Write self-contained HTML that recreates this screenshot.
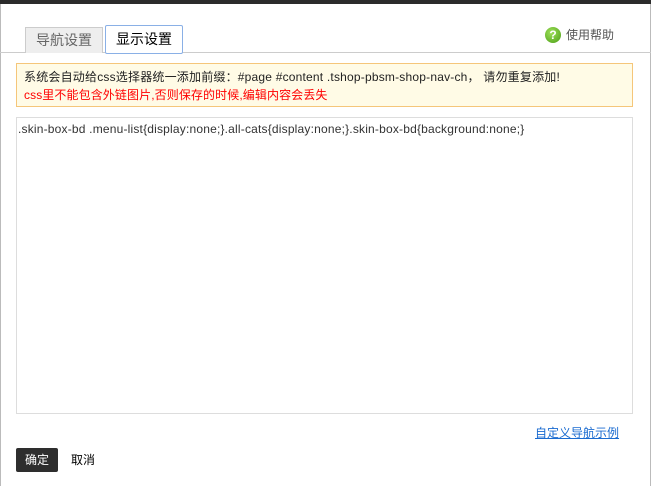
<html><head><style>
body{margin:0;width:651px;height:486px;background:#fff;position:relative;overflow:hidden;font-family:"Liberation Sans","Noto Sans CJK SC",sans-serif;font-size:12px}
.a{position:absolute}
</style></head><body>
<div class="a" style="left:0;top:0;width:651px;height:4px;background:#2b2b2b"></div>
<div class="a" style="left:0;top:4px;width:1px;height:482px;background:#bbb"></div>
<div class="a" style="left:650px;top:4px;width:1px;height:482px;background:#bbb"></div>
<div class="a" style="left:0;top:52px;width:651px;height:1px;background:#ccc"></div>
<div class="a" style="left:25px;top:27px;width:76px;height:25px;background:#eee;border:1px solid #ccc;border-bottom:none;color:#666;font-size:14px;line-height:25px;text-align:center">导航设置</div>
<div class="a" style="left:105px;top:25px;width:76px;height:27px;background:#fff;border:1px solid #8ab0e6;border-radius:2px;color:#000;font-size:14px;line-height:27px;text-align:center">显示设置</div>
<div class="a" style="left:545px;top:27px;width:16px;height:16px;border-radius:50%;background:radial-gradient(circle at 40% 35%,#9ee05a,#4a9d14);color:#fff;font-weight:bold;font-size:12px;line-height:16px;text-align:center">?</div>
<div class="a" style="left:566px;top:27px;color:#555;line-height:17px">使用帮助</div>
<div class="a" style="left:16px;top:63px;width:615px;height:42px;background:#fffbe6;border:1px solid #f5c67a"></div>
<div class="a" style="left:24px;top:69px;color:#222;line-height:16px;white-space:nowrap;letter-spacing:0.2px">系统会自动给css选择器统一添加前缀：#page #content .tshop-pbsm-shop-nav-ch， 请勿重复添加!</div>
<div class="a" style="left:24px;top:87px;color:#f00;line-height:16px;white-space:nowrap;letter-spacing:0.1px">css里不能包含外链图片,否则保存的时候,编辑内容会丢失</div>
<div class="a" style="left:16px;top:117px;width:615px;height:295px;border:1px solid #ddd"></div>
<div class="a" style="left:18px;top:121px;color:#333;line-height:16px;white-space:nowrap;letter-spacing:0.19px">.skin-box-bd .menu-list{display:none;}.all-cats{display:none;}.skin-box-bd{background:none;}</div>
<div class="a" style="left:535px;top:425px;color:#1a6bd0;text-decoration:underline;line-height:16px">自定义导航示例</div>
<div class="a" style="left:16px;top:448px;width:42px;height:24px;background:#2e2e2e;border-radius:2px;color:#fff;line-height:24px;text-align:center">确定</div>
<div class="a" style="left:71px;top:448px;color:#000;line-height:24px">取消</div>
</body></html>
